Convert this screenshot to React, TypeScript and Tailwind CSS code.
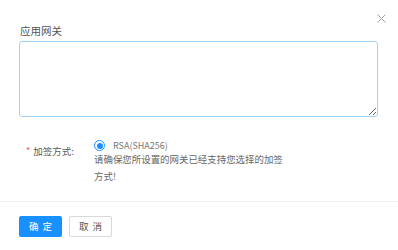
export default function App() {
    return (
        <div className="relative w-[398px] h-[250px] bg-white text-[#666] overflow-hidden" style={{ fontFamily: '"Noto Sans CJK SC", "Noto Sans", sans-serif' }}>
            <button className="absolute top-[13px] right-[12px] w-[10px] h-[10px] flex items-center justify-center text-[#a0a0a0]">
                <svg width="9" height="9" viewBox="0 0 9 9" fill="none" stroke="currentColor" strokeWidth="1">
                    <path d="M0.5 0.5 L8.5 8.5 M8.5 0.5 L0.5 8.5" />
                </svg>
            </button>
            <div className="h-[201px] px-[19px] pt-[24px]">
                <div className="text-[10.5px] leading-[14px] text-[#555] pl-[1px]">应用网关</div>
                <textarea className="mt-[3px] block w-[359px] h-[76px] rounded-[3px] border border-[#9fd2ff] outline-none bg-white" />
                <div className="flex items-start mt-[21px]">
                    <div className="w-[75px] pl-[7px] mt-[6px] flex items-center text-[9.5px] leading-[14px] text-[#595959]">
                        <span className="text-[#ff4d4f] text-[9px] mr-[3px]">*</span>
                        <span>加签方式:</span>
                    </div>
                    <div className="flex flex-col">
                        <label className="flex items-center h-[15px]">
                            <span className="w-[11px] h-[11px] rounded-full border border-[#1890ff] flex items-center justify-center">
                                <span className="w-[6px] h-[6px] rounded-full bg-[#1890ff]" />
                            </span>
                            <span className="ml-[8px] text-[9px] leading-[14px] text-[#777]">RSA(SHA256)</span>
                        </label>
                        <div className="-mt-[2px] text-[9.45px] leading-[17px] text-[#666]">
                            请确保您所设置的网关已经支持您选择的加签
                            <br />
                            方式!
                        </div>
                    </div>
                </div>
            </div>
            <div className="border-t border-[#f0f0f0] px-[19px] pt-[14px] flex gap-[7px]">
                <button className="w-[43px] h-[21px] rounded-[2px] bg-[#1890ff] text-white text-[9.5px] tracking-[4px] pl-[4px] flex items-center justify-center">确定</button>
                <button className="w-[43px] h-[21px] rounded-[2px] border border-[#d9d9d9] bg-white text-[#555] text-[9.5px] tracking-[4px] pl-[4px] flex items-center justify-center">取消</button>
            </div>
        </div>
    )
}
